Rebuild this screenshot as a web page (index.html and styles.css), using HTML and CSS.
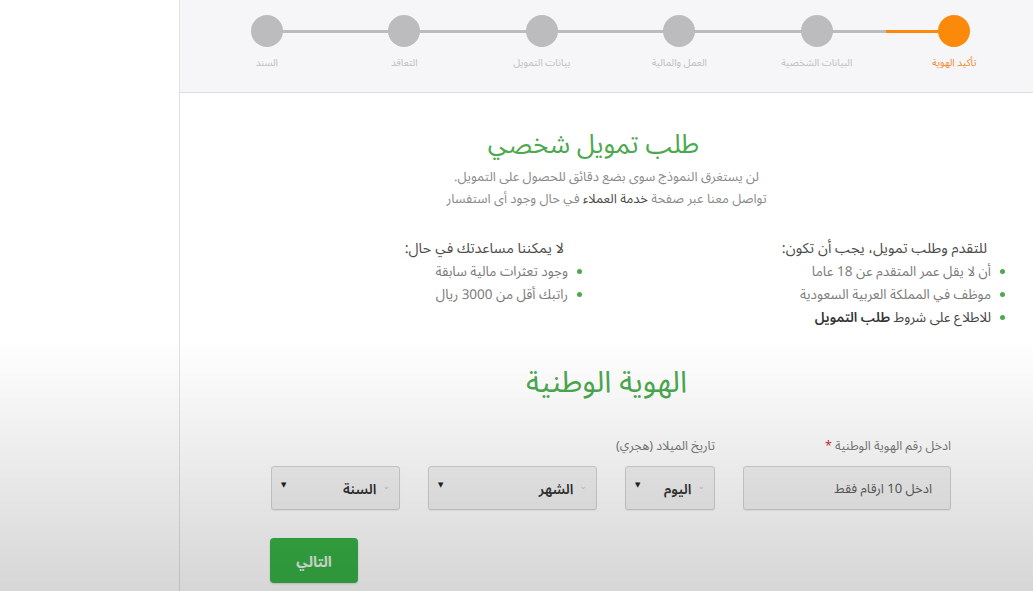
FILE: index.html
```html
<!DOCTYPE html>
<html lang="ar">
<head>
<meta charset="utf-8">
<title>طلب تمويل شخصي</title>
<link rel="stylesheet" href="styles.css">
</head>
<body>
<div class="page">
  <aside class="sidebar"></aside>
  <main class="main" dir="rtl">
    <header class="stepper-bar">
      <ol class="stepper">
        <li class="step active"><span class="dot"></span><span class="label">تأكيد الهوية</span></li>
        <li class="step"><span class="dot"></span><span class="label">البيانات الشخصية</span></li>
        <li class="step"><span class="dot"></span><span class="label">العمل والمالية</span></li>
        <li class="step"><span class="dot"></span><span class="label">بيانات التمويل</span></li>
        <li class="step"><span class="dot"></span><span class="label">التعاقد</span></li>
        <li class="step"><span class="dot"></span><span class="label">السند</span></li>
      </ol>
    </header>

    <section class="intro">
      <h1 class="title">طلب تمويل شخصي</h1>
      <p class="sub">لن يستغرق النموذج سوى بضع دقائق للحصول على التمويل.</p>
      <p class="sub">تواصل معنا عبر صفحة <b>خدمة العملاء</b> في حال وجود أى استفسار</p>
    </section>

    <section class="conditions">
      <div class="col col-right">
        <h3 class="col-title">للتقدم وطلب تمويل، يجب أن تكون:</h3>
        <ul class="list">
          <li>أن لا يقل عمر المتقدم عن 18 عاما</li>
          <li>موظف في المملكة العربية السعودية</li>
          <li class="strong">للاطلاع على شروط <b>طلب التمويل</b></li>
        </ul>
      </div>
      <div class="col col-left">
        <h3 class="col-title">لا يمكننا مساعدتك في حال:</h3>
        <ul class="list">
          <li>وجود تعثرات مالية سابقة</li>
          <li>راتبك أقل من 3000 ريال</li>
        </ul>
      </div>
    </section>

    <h2 class="section-title">الهوية الوطنية</h2>

    <form class="form">
      <div class="fields">
        <div class="field field-id">
          <label class="lbl">ادخل رقم الهوية الوطنية <span class="req">*</span></label>
          <div class="input">ادخل 10 ارقام فقط</div>
        </div>
        <div class="field field-date">
          <label class="lbl">تاريخ الميلاد (هجري)</label>
          <div class="selects">
            <div class="select s-day"><span class="chev">&#8964;</span><span class="val">اليوم</span><span class="tri">&#9660;</span></div>
            <div class="select s-month"><span class="chev">&#8964;</span><span class="val">الشهر</span><span class="tri">&#9660;</span></div>
            <div class="select s-year"><span class="chev">&#8964;</span><span class="val">السنة</span><span class="tri">&#9660;</span></div>
          </div>
        </div>
      </div>
      <div class="actions">
        <button type="button" class="btn">التالي</button>
      </div>
    </form>
  </main>
</div>
<div class="shade"></div>
</body>
</html>
```
FILE: styles.css
```css
* { box-sizing: border-box; }
html, body { margin: 0; padding: 0; }
body {
  width: 1033px;
  height: 591px;
  overflow: hidden;
  background: #fff;
  font-family: "Noto Sans Arabic UI", "Noto Sans Arabic", "DejaVu Sans", "Noto Sans", sans-serif;
}
.page {
  display: flex;
  height: 591px;
}
.sidebar {
  width: 180px;
  flex: none;
  background: #fff;
  border-right: 1px solid #e2e2e2;
}
.main {
  flex: 1;
  display: flex;
  flex-direction: column;
  background: #fff;
}

/* stepper */
.stepper-bar {
  height: 93px;
  flex: none;
  background: #f6f5f7;
  border-bottom: 1px solid #dedede;
  padding: 0 10px 0 18px;
}
.stepper {
  list-style: none;
  margin: 0;
  padding: 0;
  display: flex;
}
.step {
  flex: 1;
  position: relative;
  display: flex;
  flex-direction: column;
  align-items: center;
  padding-top: 15px;
}
.step::before,
.step::after {
  content: "";
  position: absolute;
  top: 30px;
  height: 3px;
  width: 50%;
  background: #bcbcbe;
}
.step::before { right: 50%; }
.step::after { left: 50%; }
.step:first-child::after { display: none; }
.step:last-child::before { display: none; }
.step.active::before { background: #fb8a0a; }
.dot {
  position: relative;
  z-index: 1;
  width: 32px;
  height: 32px;
  border-radius: 50%;
  background: #bcbcbe;
}
.step.active .dot { background: #fb8a0a; }
.label {
  margin-top: 8px;
  font-size: 10px;
  line-height: 14px;
  color: #c0c0c2;
  white-space: nowrap;
}
.step.active .label { color: #f0892a; }

/* intro */
.intro {
  text-align: center;
  padding-top: 30px;
}
.title {
  margin: 0 0 2px;
  font-size: 26px;
  font-weight: 400;
  color: #4ca94f;
  line-height: 40px;
  padding-right: 26px;
}
.sub {
  margin: 0;
  font-size: 13px;
  line-height: 22px;
  color: #8a8a8a;
}
.sub b { color: #4a4a4a; font-weight: 400; }

/* conditions */
.conditions {
  display: flex;
  padding-right: 46px;
  margin-top: 27px;
}
.col-right { width: 423px; }
.col-title {
  margin: 0;
  font-size: 14.5px;
  font-weight: 400;
  color: #4d4d4d;
  line-height: 22px;
}
.list {
  margin: 2px -18px 0 0;
  padding: 0;
  list-style: none;
}
.list li {
  position: relative;
  font-size: 13.5px;
  line-height: 23px;
  color: #7b7b7b;
  padding-right: 14px;
}
.list li::before {
  content: "";
  position: absolute;
  right: 0;
  top: 9px;
  width: 5px;
  height: 5px;
  border-radius: 50%;
  background: #4ca94f;
}
.list li b { color: #333; font-weight: 600; }
.list li.strong { color: #444; }

.section-title {
  margin: 32px 0 0;
  text-align: center;
  font-size: 30px;
  font-weight: 400;
  color: #4ca94f;
  line-height: 40px;
}

/* form */
.form {
  margin-top: 35px;
  padding: 0 82px 0 90px;
}
.fields {
  display: flex;
  gap: 28px;
}
.field-id { width: 208px; }
.field-date { flex: 1; }
.lbl {
  display: block;
  font-size: 12.5px;
  line-height: 16px;
  color: #7a7a7a;
  margin-top: 2px;
  margin-bottom: 12px;
}
.req { color: #d0313b; }
.input {
  height: 44px;
  border: 1px solid #d3d3d3;
  border-radius: 3px;
  background: #f2f2f2;
  box-shadow: 0 1px 1px rgba(0,0,0,0.06);
  font-size: 13px;
  color: #5e5e5e;
  padding: 0 18px;
  display: flex;
  align-items: center;
}
.selects {
  display: flex;
  gap: 28px;
}
.select {
  height: 44px;
  border: 1px solid #d3d3d3;
  border-radius: 3px;
  background: #f2f2f2;
  box-shadow: 0 1px 1px rgba(0,0,0,0.06);
  display: flex;
  align-items: center;
  padding: 0 9px 0 9px;
}
.s-day { width: 90px; }
.s-month { width: 169px; }
.s-year { width: 129px; }
.chev {
  font-size: 9px;
  color: #c8c8c8;
  margin-left: 6px;
  margin-top: -6px;
}
.val {
  font-size: 14px;
  color: #333;
  font-weight: 600;
}
.tri {
  margin-right: auto;
  font-size: 7px;
  color: #222;
  margin-top: -8px;
}
.actions {
  margin-top: 28px;
  display: flex;
  justify-content: flex-end;
}
.btn {
  width: 88px;
  height: 45px;
  border: none;
  border-radius: 4px;
  background: #38b146;
  color: #e6f4e6;
  font-family: inherit;
  font-size: 14.5px;
  font-weight: 700;
  box-shadow: 0 1px 2px rgba(0,0,0,0.15);
}

/* video vignette overlay */
.shade {
  position: fixed;
  left: 0;
  top: 0;
  width: 1033px;
  height: 591px;
  pointer-events: none;
  background: linear-gradient(to bottom, rgba(0,0,0,0) 0, rgba(0,0,0,0) 340px, rgba(0,0,0,0.16) 591px);
}
```
